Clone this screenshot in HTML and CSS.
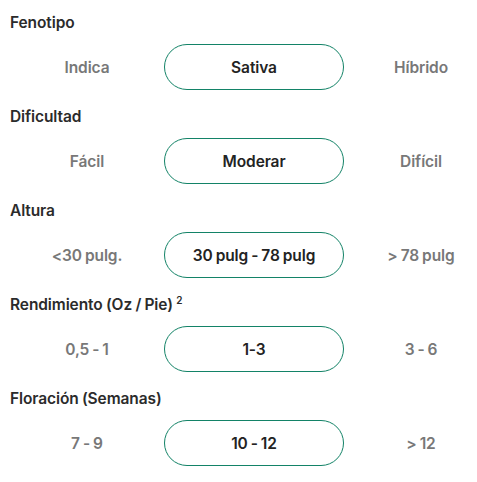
FILE: index.html
```html
<!DOCTYPE html>
<html>
<head>
<meta charset="utf-8" />
<title>Filtros</title>
<link rel="stylesheet" href="styles.css">
</head>
<body>
<div class="filters">
    <div class="group">
        <h3 class="label">Fenotipo</h3>
        <div class="options">
            <span class="opt">Indica</span>
            <span class="opt on">Sativa</span>
            <span class="opt">Híbrido</span>
        </div>
    </div>
    <div class="group">
        <h3 class="label">Dificultad</h3>
        <div class="options">
            <span class="opt">Fácil</span>
            <span class="opt on">Moderar</span>
            <span class="opt">Difícil</span>
        </div>
    </div>
    <div class="group">
        <h3 class="label">Altura</h3>
        <div class="options">
            <span class="opt">&lt;30 pulg.</span>
            <span class="opt on">30 pulg - 78 pulg</span>
            <span class="opt">&gt; 78 pulg</span>
        </div>
    </div>
    <div class="group">
        <h3 class="label">Rendimiento (Oz / Pie) <sup>2</sup></h3>
        <div class="options">
            <span class="opt">0,5 - 1</span>
            <span class="opt on">1-3</span>
            <span class="opt">3 - 6</span>
        </div>
    </div>
    <div class="group">
        <h3 class="label">Floración (Semanas)</h3>
        <div class="options">
            <span class="opt">7 - 9</span>
            <span class="opt on">10 - 12</span>
            <span class="opt">&gt; 12</span>
        </div>
    </div>
</div>
</body>
</html>
```

FILE: styles.css
```css
* { margin: 0; padding: 0; box-sizing: border-box; }
body { background: #fff; font-family: Inter, "Liberation Sans", sans-serif; overflow: hidden; }
.filters { width: 498px; padding: 12px 0 0 10px; }
.group { margin-bottom: 16px; }
.label { font-size: 15.5px; line-height: 21px; font-weight: 600; color: #2b2b2b; margin-bottom: 11px; letter-spacing: -0.1px; word-spacing: -0.5px; }
.label sup { font-size: 10px; vertical-align: 6px; line-height: 0; }
.options { display: grid; grid-template-columns: 154px 180px 154px; align-items: center; }
.opt { display: flex; align-items: center; justify-content: center; height: 46px; font-size: 15.5px; font-weight: 600; color: #787878; letter-spacing: -0.1px; word-spacing: -0.8px; }
.opt.on { border: 1.3px solid #138367; border-radius: 23px; color: #232323; }
```
